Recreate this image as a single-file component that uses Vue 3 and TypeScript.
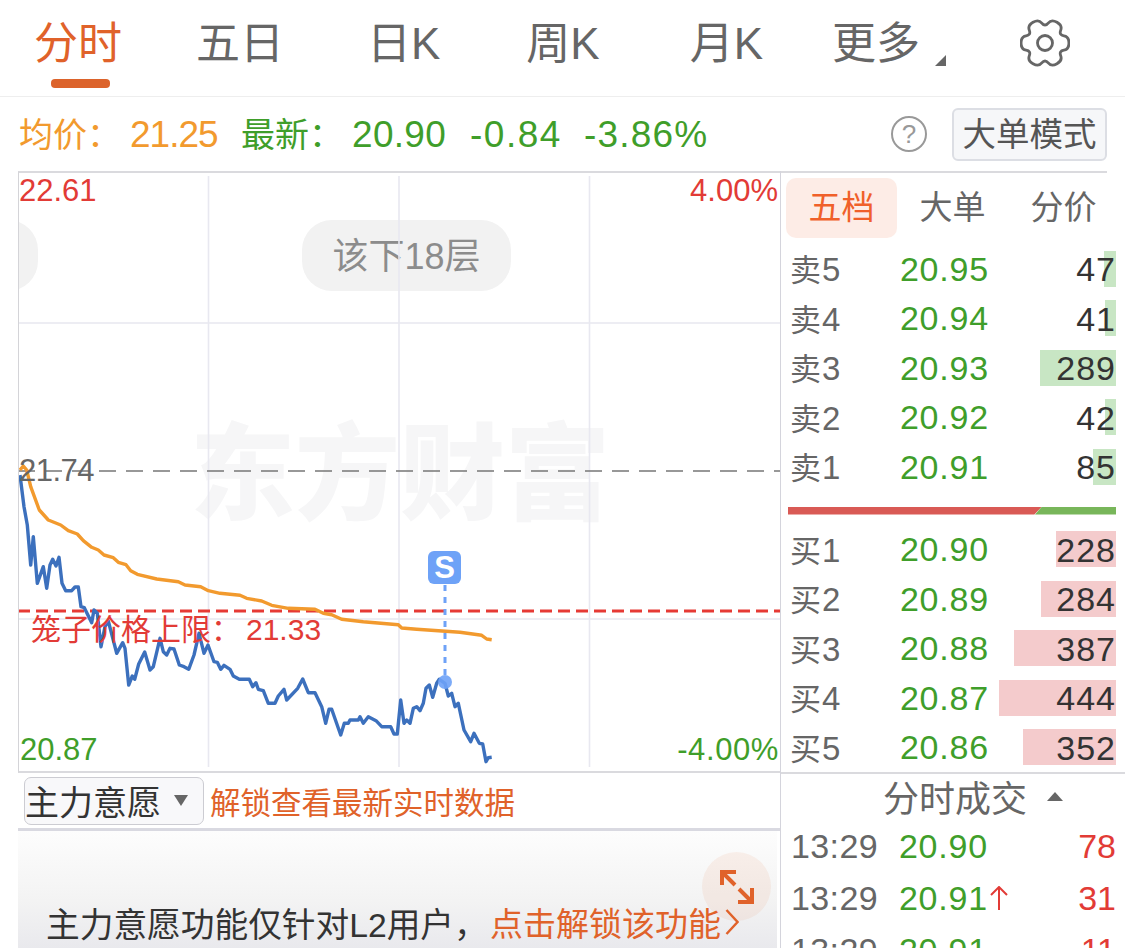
<script setup lang="ts">
const tabs = [
  { label: '分时', cls: 'on' },
  { label: '五日', cls: '' },
  { label: '日K', cls: 'k1' },
  { label: '周K', cls: 'k2' },
  { label: '月K', cls: 'k3' },
  { label: '更多', cls: 'more' },
]

const sells = [
  { zh: '卖', n: 5, price: '20.95', vol: 47, bar: 12 },
  { zh: '卖', n: 4, price: '20.94', vol: 41, bar: 11 },
  { zh: '卖', n: 3, price: '20.93', vol: 289, bar: 76 },
  { zh: '卖', n: 2, price: '20.92', vol: 42, bar: 11 },
  { zh: '卖', n: 1, price: '20.91', vol: 85, bar: 23 },
]
const buys = [
  { zh: '买', n: 1, price: '20.90', vol: 228, bar: 60 },
  { zh: '买', n: 2, price: '20.89', vol: 284, bar: 75 },
  { zh: '买', n: 3, price: '20.88', vol: 387, bar: 102 },
  { zh: '买', n: 4, price: '20.87', vol: 444, bar: 117 },
  { zh: '买', n: 5, price: '20.86', vol: 352, bar: 93 },
]
const ticks = [
  { time: '13:29', price: '20.90', up: false, vol: 78 },
  { time: '13:29', price: '20.91', up: true, vol: 31 },
  { time: '13:29', price: '20.91', up: false, vol: 11 },
]

// traced from the reference at 3x, origin (0,440)
const blueRaw = [60,105,72,200,82,255,92,375,100,290,112,430,130,380,140,445,150,375,158,358,168,378,177,352,186,430,197,452,215,452,225,441,235,441,243,500,253,503,275,548,282,510,292,520,303,620,315,560,325,543,350,640,368,608,375,625,386,735,397,708,404,718,416,672,434,636,450,690,460,680,480,595,490,635,500,645,510,625,522,627,538,675,552,680,566,688,582,645,597,580,612,640,624,615,642,665,652,667,662,688,672,676,690,688,700,708,718,718,748,718,758,740,768,728,775,748,790,752,805,790,825,790,835,768,852,748,860,780,893,745,908,717,925,758,945,758,965,800,977,850,987,808,995,808,1022,885,1033,850,1045,850,1050,840,1075,840,1080,830,1090,850,1105,830,1128,842,1145,860,1172,860,1182,882,1192,882,1202,780,1212,850,1220,840,1230,850,1240,805,1250,800,1260,812,1270,790,1278,745,1288,735,1298,772,1310,730,1318,718,1335,730,1345,768,1355,760,1365,800,1375,790,1392,870,1412,905,1422,880,1438,910,1448,912,1458,965,1465,953,1475,952]
const orangeRaw = [60,90,70,78,80,90,92,140,118,210,145,240,182,255,205,272,232,282,250,302,275,322,295,330,312,345,340,353,355,367,378,374,392,392,412,403,470,417,535,425,555,435,602,440,625,452,660,460,720,466,740,475,785,483,815,496,865,505,945,508,970,520,995,524,1025,538,1090,545,1195,554,1205,564,1250,568,1380,577,1445,586,1460,597,1475,599]

const toPoints = (raw: number[]) => {
  const out: string[] = []
  for (let i = 0; i < raw.length; i += 2) {
    out.push(`${(raw[i] / 3).toFixed(1)},${(440 + raw[i + 1] / 3).toFixed(1)}`)
  }
  return out.join(' ')
}
const bluePoints = toPoints(blueRaw)
const orangePoints = toPoints(orangeRaw)

// six flat topped lobes, smoothed through the midpoints
const gearPath = () => {
  const pts: [number, number][] = []
  const polar = (r: number, deg: number): [number, number] => [
    25 + r * Math.cos((deg * Math.PI) / 180),
    25 + r * Math.sin((deg * Math.PI) / 180),
  ]
  for (let k = 0; k < 6; k++) {
    const c = k * 60
    pts.push(polar(24.8, c - 15), polar(24.8, c + 15), polar(16, c + 30))
  }
  const mid = (a: [number, number], b: [number, number]) => `${((a[0] + b[0]) / 2).toFixed(2)} ${((a[1] + b[1]) / 2).toFixed(2)}`
  let d = `M${mid(pts[pts.length - 1], pts[0])}`
  pts.forEach((p, i) => {
    d += ` Q${p[0].toFixed(2)} ${p[1].toFixed(2)} ${mid(p, pts[(i + 1) % pts.length])}`
  })
  return d + 'Z'
}
const gear = gearPath()
</script>

<template>
  <div class="page">
    <header class="tabs">
      <div v-for="t in tabs" :key="t.label" class="tab" :class="t.cls">{{ t.label }}</div>
      <svg class="gear" viewBox="0 0 50 50" width="50" height="50">
        <path :d="gear" fill="none" stroke="#666" stroke-width="2.8" />
        <circle cx="25" cy="25" r="7.5" fill="none" stroke="#666" stroke-width="2.8" />
      </svg>
    </header>

    <section class="info">
      <span class="zh avg">均价：</span>
      <span class="num avg narrow">21.25</span>
      <span class="zh last">最新：</span>
      <span class="num last">20.90</span>
      <span class="num last">-0.84</span>
      <span class="num last">-3.86%</span>
      <span class="help">?</span>
      <button class="big-btn">大单模式</button>
    </section>

    <div class="main">
      <div class="left">
        <div class="chart">
          <div class="watermark">东方财富</div>
          <div class="pill">该下18层</div>
          <div class="pill-edge"></div>
          <svg class="plot" viewBox="18 171 762 600" width="762" height="600">
            <path d="M208.500 176V767M399 176V767M589.500 176V767M18 323H780M18 619H780" stroke="#e8e8f0" stroke-width="1.600" fill="none" />
            <path d="M18 471H780" stroke="#777" stroke-width="1.500" stroke-dasharray="17 10" />
            <path d="M18 611H780" stroke="#e63a35" stroke-width="3" stroke-dasharray="12 6" />
            <polyline :points="bluePoints" fill="none" stroke="#3c70bd" stroke-width="3.400" stroke-linejoin="round" />
            <polyline :points="orangePoints" fill="none" stroke="#f29a2e" stroke-width="3.400" stroke-linejoin="round" />
            <path d="M445 585V678" stroke="#6ea2f7" stroke-width="3" stroke-dasharray="6 6" />
            <circle cx="445" cy="682" r="7" fill="#6ea2f7" fill-opacity=".9" />
          </svg>
          <div class="sig">S</div>
          <span class="lab tl red">22.61</span>
          <span class="lab tr red">4.00%</span>
          <span class="lab ml grey">21.74</span>
          <span class="lab bl green">20.87</span>
          <span class="lab br green">-4.00%</span>
          <span class="cage">笼子价格上限：<span class="cage-num">21.33</span></span>
        </div>
        <div class="select-row">
          <div class="select">主力意愿<i class="caret"></i></div>
          <span class="unlock">解锁查看最新实时数据</span>
        </div>
        <div class="locked">
          <div class="lock-text">
            <span class="lock-a">主力意愿功能仅针对L2用户，</span>
            <span class="lock-b">点击解锁该功能</span>
            <svg class="chev" viewBox="0 0 14 26" width="14" height="26" fill="none" stroke="#e0622a" stroke-width="2.400">
              <path d="M1.500 1L12.500 13L1.500 25" />
            </svg>
          </div>
          <div class="expand">
            <svg viewBox="0 0 34 34" width="34" height="34" fill="none" stroke="#e0622a" stroke-width="4">
              <path d="M2 15V2H16M2 2L15 15M32 18V32H18M32 32L19 19" />
            </svg>
          </div>
        </div>
      </div>

      <aside class="right">
        <div class="depth-tabs">
          <div class="dt on">五档</div>
          <div class="dt">大单</div>
          <div class="dt">分价</div>
        </div>
        <div class="rows sell">
          <div v-for="r in sells" :key="r.n" class="row">
            <span class="name"><span class="name-zh">{{ r.zh }}</span>{{ r.n }}</span>
            <span class="price">{{ r.price }}</span>
            <span class="vol"><i class="bar" :style="{ width: r.bar + 'px' }"></i><b>{{ r.vol }}</b></span>
          </div>
        </div>
        <div class="ratio"><div class="ratio-red"></div><div class="ratio-green"></div></div>
        <div class="rows buy">
          <div v-for="r in buys" :key="r.n" class="row">
            <span class="name"><span class="name-zh">{{ r.zh }}</span>{{ r.n }}</span>
            <span class="price">{{ r.price }}</span>
            <span class="vol"><i class="bar" :style="{ width: r.bar + 'px' }"></i><b>{{ r.vol }}</b></span>
          </div>
        </div>
        <div class="tick-head">分时成交<i class="up-caret"></i></div>
        <div v-for="(t, i) in ticks" :key="i" class="tick">
          <span class="t-time">{{ t.time }}</span>
          <span class="t-price">{{ t.price }}
            <svg v-if="t.up" class="t-up" viewBox="0 0 20 24" width="20" height="24" fill="none" stroke="#e23b36" stroke-width="2">
              <path d="M10 1V24M2 9L10 1L18 9" />
            </svg>
          </span>
          <span class="t-vol">{{ t.vol }}</span>
        </div>
      </aside>
    </div>
  </div>
</template>

<style scoped>
.page {
  width: 1125px;
  height: 948px;
  overflow: hidden;
  background: #fff;
  font-family: "Liberation Sans", "Noto Sans CJK SC", sans-serif;
  color: #333;
}
.tabs {
  display: flex;
  align-items: flex-start;
  height: 96px;
  padding-left: 34px;
  border-bottom: 1px solid #eee;
  position: relative;
}
.tab {
  font-size: 44px;
  line-height: 88px;
  color: #666;
  margin-right: 74px;
  position: relative;
  white-space: nowrap;
}
.tab.on {
  color: #e0622a;
}
.tab.on::after {
  content: "";
  position: absolute;
  left: 17px;
  top: 79px;
  width: 59px;
  height: 9px;
  border-radius: 4px;
  background: #dc632b;
}
.tab.k1 { margin-left: 9px; }
.tab.k2 { margin-left: 12px; }
.tab.k3 { margin-left: 16px; }
.tab.more { margin-left: -5px; }
.tab.more::after {
  content: "";
  position: absolute;
  right: -26px;
  top: 55px;
  border-left: 11px solid transparent;
  border-bottom: 11px solid #666;
}
.gear {
  position: absolute;
  left: 1020px;
  top: 18px;
}
.info {
  display: flex;
  align-items: center;
  height: 74px;
  box-sizing: border-box;
  padding: 2px 18px 0 19px;
}
.zh {
  width: 111px;
  font-size: 34px;
  line-height: 40px;
}
.num {
  font-size: 37px;
  line-height: 40px;
  letter-spacing: .3px;
  white-space: nowrap;
}
.num.avg { width: 111px; letter-spacing: -1px; }
.num:nth-of-type(4) { width: 118px; }
.num:nth-of-type(5) { width: 114px; letter-spacing: 1.500px; }
.num:nth-of-type(6) { letter-spacing: 1.200px; }
.avg { color: #f29a2e; }
.last { color: #3f9e2a; }
.help {
  width: 36px;
  height: 36px;
  margin-left: auto;
  margin-right: 25px;
  margin-top: -3px;
  border: 2px solid #999;
  border-radius: 50%;
  box-sizing: border-box;
  color: #999;
  font-size: 26px;
  line-height: 32px;
  text-align: center;
}
.big-btn {
  width: 155px;
  height: 53px;
  padding: 0;
  border: 2px solid #dcdee4;
  border-radius: 6px;
  background: #f6f7f9;
  color: #555;
  font-family: inherit;
  font-size: 33.500px;
  line-height: 49px;
  white-space: nowrap;
  margin-top: -1px;
}
.main {
  display: flex;
  align-items: flex-start;
}
.left {
  width: 762px;
  margin-left: 18px;
  flex: none;
}
.chart {
  position: relative;
  width: 761px;
  height: 598px;
  border-top: 2px solid #dadade;
  border-left: 1px solid #d4d4d8;
  border-bottom: 2px solid #dadade;
  overflow: hidden;
}
.watermark {
  position: absolute;
  left: 171px;
  top: 247px;
  font-size: 105px;
  line-height: 110px;
  font-weight: 900;
  color: #f6f6f7;
  white-space: nowrap;
}
.pill {
  position: absolute;
  left: 283px;
  top: 47px;
  width: 209px;
  height: 71px;
  border-radius: 30px;
  background: #f2f2f2;
  color: #8c8c8c;
  font-size: 36px;
  line-height: 74px;
  text-align: center;
}
.pill-edge {
  position: absolute;
  left: -50px;
  top: 47px;
  width: 69px;
  height: 71px;
  border-radius: 30px;
  background: #f2f2f2;
}
.plot {
  position: absolute;
  left: -1px;
  top: -2px;
}
.sig {
  position: absolute;
  left: 409px;
  top: 378px;
  width: 33px;
  height: 33px;
  border-radius: 6px;
  background: #6ea2f7;
  color: #fff;
  font-size: 31px;
  font-weight: 700;
  line-height: 33px;
  text-align: center;
}
.lab {
  position: absolute;
  font-size: 31px;
  line-height: 36px;
  white-space: nowrap;
}
.red { color: #e23b36; }
.green { color: #3f9e2a; }
.grey { color: #666; letter-spacing: -.5px; }
.tl { left: 0; top: 0; }
.tr { right: 2px; top: 0; }
.ml { left: 0; top: 280px; }
.bl { left: 1px; top: 559px; }
.br { right: 1px; top: 559px; letter-spacing: .6px; }
.cage {
  position: absolute;
  left: 12px;
  top: 439px;
  font-size: 30px;
  line-height: 36px;
  color: #e23b36;
  white-space: nowrap;
}
.cage-num {
  margin-left: 5px;
}
.select-row {
  display: flex;
  align-items: center;
  height: 55px;
  padding-left: 6px;
  border-bottom: 3px solid #d9d9e1;
}
.select {
  display: flex;
  align-items: center;
  width: 180px;
  height: 48px;
  box-sizing: border-box;
  border: 1px solid #ccccd2;
  border-radius: 7px;
  background: #f8f8fa;
  font-size: 34px;
  color: #333;
  white-space: nowrap;
}
.caret {
  margin-left: 13px;
  border-left: 7px solid transparent;
  border-right: 7px solid transparent;
  border-top: 11px solid #666;
}
.unlock {
  margin-left: 6px;
  font-size: 30.500px;
  color: #e0622a;
  white-space: nowrap;
}
.locked {
  position: relative;
  height: 117px;
  margin-right: 3px;
  background: linear-gradient(#fdfdfd, #f3f3f3 60%, #e9e9ed);
}
.lock-text {
  position: absolute;
  left: 28px;
  top: 71px;
  display: flex;
  align-items: center;
  height: 40px;
  font-size: 33px;
  color: #333;
  white-space: nowrap;
}
.lock-a {
  width: 444px;
  font-size: 33.700px;
}
.lock-b {
  color: #e0622a;
}
.chev {
  margin-left: 4px;
}
.expand {
  position: absolute;
  left: 684px;
  top: 21px;
  width: 69px;
  height: 69px;
  border-radius: 50%;
  background: rgba(224, 98, 42, .08);
  display: flex;
  align-items: center;
  justify-content: center;
}
.right {
  width: 344px;
  flex: none;
  border-left: 1px solid #d4d4dc;
}
.depth-tabs {
  display: flex;
  align-items: center;
  height: 73px;
  margin-right: 18px;
  padding-left: 5px;
  padding-bottom: 1px;
  box-sizing: border-box;
  border-top: 2px solid #dadade;
  font-size: 33px;
  color: #666;
}
.dt {
  flex: none;
  width: 111px;
  height: 60px;
  line-height: 60px;
  text-align: center;
}
.dt.on {
  background: #fdece6;
  border-radius: 10px;
  color: #f0602a;
}
.rows {
  padding-left: 9px;
}
.row {
  display: flex;
  align-items: center;
  height: 49.500px;
  font-size: 34px;
}
.name {
  position: relative;
  top: -1px;
  width: 71px;
  font-size: 33px;
  color: #666;
  white-space: nowrap;
}
.name-zh {
  font-size: 31px;
  margin-right: 1px;
}
.price {
  position: relative;
  top: .5px;
  width: 128px;
  text-align: right;
  letter-spacing: .8px;
  color: #3f9e2a;
}
.vol {
  position: relative;
  width: 127px;
  height: 36px;
  line-height: 36px;
  text-align: right;
  letter-spacing: 1px;
  color: #333;
}
.vol b {
  position: relative;
  top: .5px;
  font-weight: 400;
}
.bar {
  position: absolute;
  right: 0;
  top: 0;
  height: 36px;
}
.sell .bar { background: #c8e6c4; }
.buy .bar { background: #f4cbcc; }
.ratio {
  display: flex;
  height: 8px;
  margin: 15px 9px 10px 7px;
}
.ratio-red {
  width: 254px;
  background: #d95a55;
  clip-path: polygon(0 0, 100% 0, 97% 100%, 0 100%);
}
.ratio-green {
  flex: 1;
  background: #78b65a;
  margin-left: -7px;
  clip-path: polygon(7px 0, 100% 0, 100% 100%, 0 100%);
}
.tick-head {
  height: 44px;
  padding-bottom: 2px;
  border-top: 2px solid #dadade;
  padding-left: 102px;
  font-size: 36px;
  color: #666;
  display: flex;
  align-items: center;
}
.up-caret {
  margin-left: 20px;
  border-left: 8px solid transparent;
  border-right: 8px solid transparent;
  border-bottom: 9px solid #666;
}
.tick {
  display: flex;
  align-items: center;
  height: 52px;
  padding-left: 10px;
  font-size: 34px;
}
.t-time {
  width: 86px;
  letter-spacing: .4px;
  color: #666;
}
.t-price {
  position: relative;
  width: 111px;
  text-align: right;
  letter-spacing: .8px;
  color: #3f9e2a;
  white-space: nowrap;
}
.t-up {
  position: absolute;
  left: 112px;
  top: 7px;
}
.t-vol {
  width: 128px;
  text-align: right;
  color: #e23b36;
}
</style>
